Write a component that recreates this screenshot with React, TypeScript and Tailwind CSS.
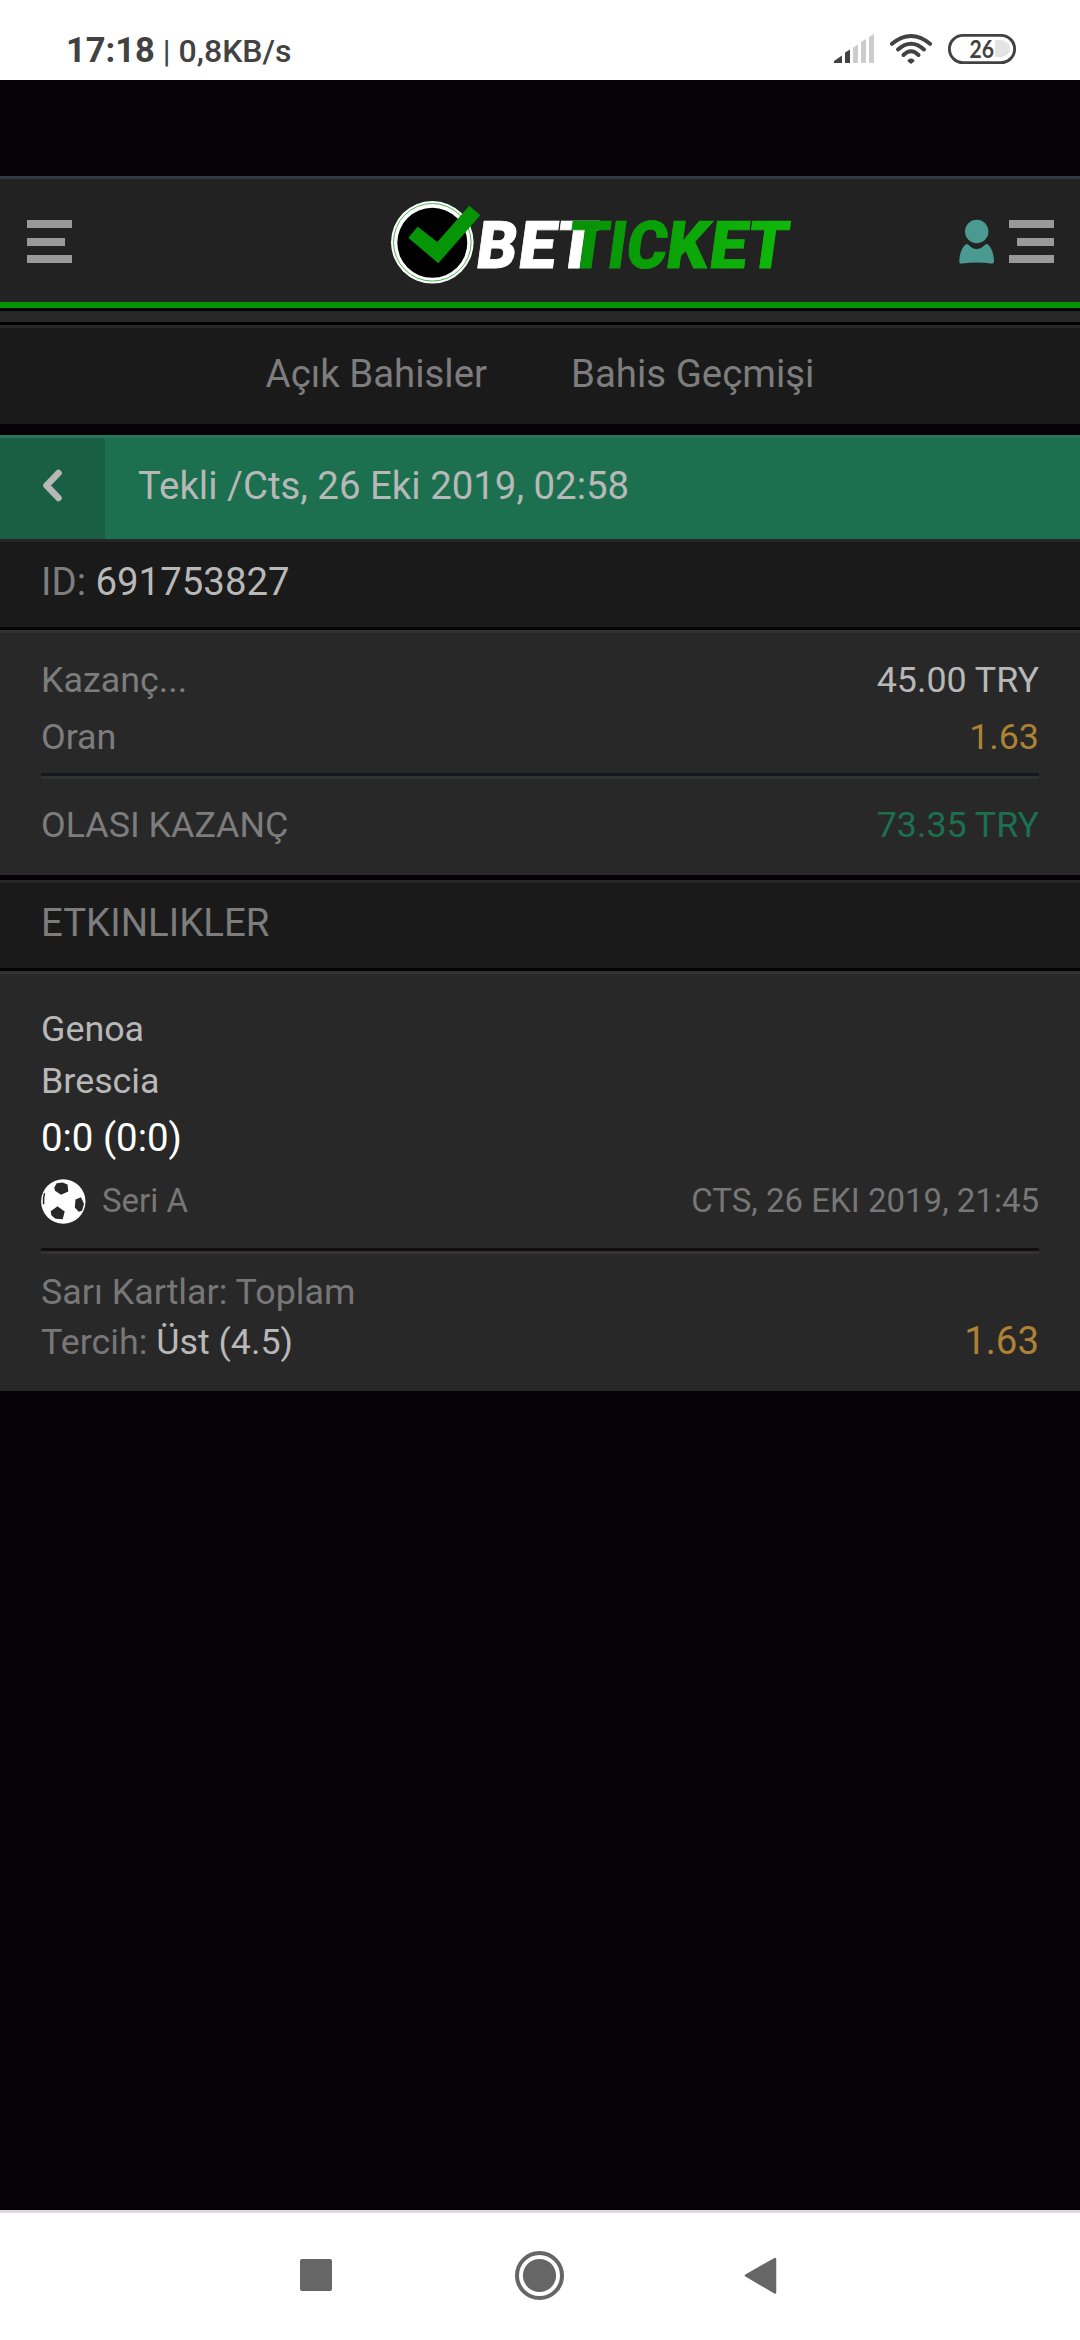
import React from "react";

function SignalIcon() {
  return (
    <svg width="42" height="32" viewBox="833 33 42 32">
      <path d="M834 63V61L842 55.500V63Z M845 63V52.500L850 49.500V63Z" fill="#424242" />
      <path d="M853 63V47.500L858 44.500V63Z M861 63V42L866 39V63Z M869 63V37L874 34V63Z" fill="#cccccc" />
    </svg>
  );
}

function WifiIcon() {
  return (
    <svg width="44" height="32" viewBox="889 33 44 32" fill="none" stroke="#424242" strokeWidth="4" strokeLinecap="round">
      <path d="M892 43.800Q911 28.200 930 43.800" />
      <path d="M898 49.500Q911 38 924 49.500" />
      <path d="M903.500 55Q911 47.500 918.500 55" />
      <path d="M908.500 60.800Q911 58.500 913.500 60.800L911 62.800Z" fill="#424242" strokeWidth="2" strokeLinejoin="round" />
    </svg>
  );
}

function BatteryIcon() {
  return (
    <svg width="70" height="32" viewBox="947 33 70 32">
      <rect x="949.4" y="35.4" width="65.200" height="27.200" rx="13.600" fill="none" stroke="#424242" strokeWidth="2.900" />
      <path d="M995 40H1001Q1010 41 1010 48.500Q1010 56 1001 57H995Z" fill="#e4e4e4" />
      <text x="969.500" y="58" textLength="24.500" lengthAdjust="spacingAndGlyphs" fontFamily="Lato" fontWeight="700" fontSize="24.500" fill="#424242">
        26
      </text>
    </svg>
  );
}

function MenuIcon({ right = false }: { right?: boolean }) {
  return (
    <div className={`flex w-[45px] flex-col gap-[9.500px] ${right ? "items-end" : "items-start"}`}>
      <div className="h-2 w-full bg-[#999999]" />
      <div className="h-2 w-[37.500px] bg-[#999999]" />
      <div className="h-2 w-full bg-[#999999]" />
    </div>
  );
}

function UserIcon() {
  return (
    <svg width="36" height="46" viewBox="959 219 36 46" fill="#4a9a92">
      <circle cx="976.700" cy="231.500" r="11.700" />
      <path d="M966.500 244C969 244 971 249 976.700 249C982.500 249 984.500 244 987 244C991 246 994 254 994 261C994 263 993 263.800 991 263.600Q976.700 261.200 962.500 263.600C960 263.800 959.300 263 959.300 261C959.300 254 962.500 246 966.500 244Z" />
    </svg>
  );
}

const letters = [
  { c: "B", x: 474.2, w: 40.5, fill: "#ffffff" },
  { c: "E", x: 516.3, w: 37.4, fill: "#ffffff" },
  { c: "T", x: 553.7, w: 40.5, fill: "#ffffff" },
  { c: "T", x: 565.4, w: 40.5, fill: "url(#word)" },
  { c: "I", x: 605.8, w: 18, fill: "url(#word)" },
  { c: "C", x: 624.2, w: 40.5, fill: "url(#word)" },
  { c: "K", x: 664, w: 42.3, fill: "url(#word)" },
  { c: "E", x: 707.2, w: 37.6, fill: "url(#word)" },
  { c: "T", x: 745, w: 40.5, fill: "url(#word)" },
];

function Logo() {
  return (
    <svg className="overflow-visible" width="406" height="90" viewBox="388 197 406 90">
      <defs>
        <linearGradient id="word" gradientUnits="userSpaceOnUse" x1="580" y1="0" x2="785" y2="0">
          <stop offset="0" stopColor="#069406" />
          <stop offset="1" stopColor="#10b90a" />
        </linearGradient>
      </defs>
      <circle cx="432.300" cy="242.300" r="41.300" fill="#fff" />
      <circle cx="432.300" cy="242.300" r="38.800" fill="none" stroke="#4fb44f" strokeWidth="1" />
      <circle cx="432.300" cy="242.800" r="35" fill="#000" />
      <path d="M408.300 237.700L417.700 226.700L437.300 242L469.300 205.700L480.300 215.300L438.300 263.300Z" fill="#069506" />
      <g transform="translate(0 268.200) skewX(-7.800)" fontFamily="Roboto" fontWeight="900" fontSize="66">
        {letters.map((l, i) => (
          <text key={i} x={l.x} y="0" textLength={l.w} lengthAdjust="spacingAndGlyphs" fill={l.fill} stroke={l.fill} strokeWidth="0.800">
            {l.c}
          </text>
        ))}
      </g>
    </svg>
  );
}

function BallIcon() {
  return (
    <svg width="45" height="45" viewBox="0 0 45 45">
      <circle cx="22.300" cy="22.500" r="22.200" fill="#fff" />
      <g fill="#282828">
        <path d="M13.300 8.500L15.700 4.300L21.500 3.600L26.500 5.500L27.300 12.500L20 15.800L14 11.800Z" />
        <path d="M34.500 20.500L40 18.200L43 25L41 31.700L37.700 32.700L33.800 28.500Z" />
        <path d="M9.700 32.300L16.500 27.300L23.700 32.500L21.700 40.200L14.500 39.700L10.500 36.500Z" />
        <path d="M2.700 14.500L4.200 13.800Q3 19 3.300 25.500L1.800 25Q1.300 19 2.700 14.500Z" />
      </g>
    </svg>
  );
}

function Row({ label, value, tone }: { label: string; value: string; tone: string }) {
  return (
    <div className="flex justify-between text-[35.840px] leading-[57px]">
      <span>{label}</span>
      <span className={tone}>{value}</span>
    </div>
  );
}

export default function App() {
  return (
    <div className="flex h-[2340px] w-[1080px] flex-col overflow-hidden bg-[#040204] font-['Roboto',sans-serif] text-[#7d7d7d]">
      <div className="flex h-20 shrink-0 justify-between bg-white pr-[63px] pl-[66px] text-[#424242]">
        <div className="flex items-baseline pt-[29px] font-medium whitespace-pre">
          <span className="text-[34.500px] leading-[42px] font-bold">17:18</span>
          <span className="text-[32px] leading-[42px] font-normal"> | </span>
          <span className="text-[32px] leading-[42px]">0,8KB/s</span>
        </div>
        <div className="flex items-start gap-[14px] pt-[33px]">
          <SignalIcon />
          <WifiIcon />
          <BatteryIcon />
        </div>
      </div>

      <header className="mt-24 flex h-[132px] shrink-0 items-start justify-between border-t-[3px] border-b-[6px] border-t-[#323845] border-b-[#069406] bg-[#222222] pr-[26px] pl-[27px]">
        <div className="pt-[41px]">
          <MenuIcon />
        </div>
        <div className="ml-[151px] pt-[18px]">
          <Logo />
        </div>
        <div className="flex gap-[14px] pt-10">
          <UserIcon />
          <div className="pt-px">
            <MenuIcon right />
          </div>
        </div>
      </header>
      <div className="mt-[3px] h-[11px] shrink-0 bg-[#282828]" />

      <nav className="mt-[3px] flex h-[99px] shrink-0 justify-center gap-[84px] border-t-[3px] border-[#262626] bg-[#1a1a1a] pt-[22px] text-[38.400px] leading-[48px]">
        <span>Açık Bahisler</span>
        <span>Bahis Geçmişi</span>
      </nav>

      <div className="mt-[11px] flex h-[104px] shrink-0 border-t-[3px] border-[#2a755a] bg-[#1c7050]">
        <div className="flex w-[105px] items-center bg-[#185f45] pb-[6px] pl-[42px]">
          <svg width="22" height="36" viewBox="0 0 22 36" fill="none" stroke="#b8b8b8" strokeWidth="6.500" strokeLinecap="round" strokeLinejoin="round">
            <path d="M16.500 5L4.500 17.500L16.500 30" />
          </svg>
        </div>
        <span className="pt-[24px] pl-[33px] text-[38.400px] leading-[48px] text-[#b8b8b8]">Tekli /Cts, 26 Eki 2019, 02:58</span>
      </div>

      <div className="h-[88px] shrink-0 border-t-[3px] border-[#262626] bg-[#1a1a1a] pt-[16px] pl-[41px] text-[38.400px] leading-[48px]">
        ID: <span className="text-[#b8b8b8]">691753827</span>
      </div>

      <section className="mt-[3px] h-[245px] shrink-0 border-t-[3px] border-[#323232] bg-[#282828] px-[41px] pt-[19px]">
        <Row label="Kazanç..." value="45.00 TRY" tone="text-[#b8b8b8]" />
        <Row label="Oran" value="1.63" tone="text-[#ad8235]" />
        <div className="mt-[7px] mb-[18px] h-[6px] border-t-[3px] border-[#141722] bg-[#323232]" />
        <Row label="OLASI KAZANÇ" value="73.35 TRY" tone="text-[#1c7050]" />
      </section>

      <div className="mt-[5px] h-[88px] shrink-0 border-t-[3px] border-[#262626] bg-[#1a1a1a] pt-[16px] pl-[41px] text-[38.400px] leading-[48px]">
        ETKINLIKLER
      </div>

      <section className="mt-[3px] h-[420px] shrink-0 border-t-[3px] border-[#323232] bg-[#282828] px-[41px] pt-[29px] text-[35.840px] text-[#777777]">
        <div className="leading-[52px] text-[#b8b8b8]">Genoa</div>
        <div className="leading-[52px] text-[#b8b8b8]">Brescia</div>
        <div className="pt-[3px] text-[38.400px] leading-[56px] text-white">0:0 (0:0)</div>
        <div className="flex h-[52px] items-start pt-[13px] text-[33px] leading-[44px]">
          <BallIcon />
          <span className="ml-4">Seri A</span>
          <span className="ml-auto">CTS, 26 EKI 2019, 21:45</span>
        </div>
        <div className="mt-[30px] h-[6px] border-t-[3px] border-[#110d0d] bg-[#323232]" />
        <div className="mt-[13px] leading-[50px]">Sarı Kartlar: Toplam</div>
        <div className="flex items-baseline justify-between leading-[50px]">
          <span>
            Tercih: <span className="text-[#b8b8b8]">Üst (4.5)</span>
          </span>
          <span className="-mt-px text-[38.400px] text-[#ad8235]">1.63</span>
        </div>
      </section>

      <footer className="mt-auto flex h-[130px] shrink-0 border-t-[3px] border-[#dcdade] bg-white pt-[38px] pl-[300px]">
        <div className="mt-[8px] h-8 w-8 rounded-[2px] bg-[#666666]" />
        <svg className="ml-[182px]" width="51" height="51" viewBox="0 0 51 51">
          <circle cx="25.500" cy="24.500" r="22.500" fill="none" stroke="#666" strokeWidth="4" />
          <circle cx="25.500" cy="24.500" r="16.600" fill="#666" />
        </svg>
        <svg className="mt-[6px] ml-[179px]" width="33" height="38" viewBox="0 0 33 38">
          <path d="M2 18.500L31 2V35.500Z" fill="#666" stroke="#666" strokeWidth="2.500" strokeLinejoin="round" />
        </svg>
      </footer>
    </div>
  );
}
